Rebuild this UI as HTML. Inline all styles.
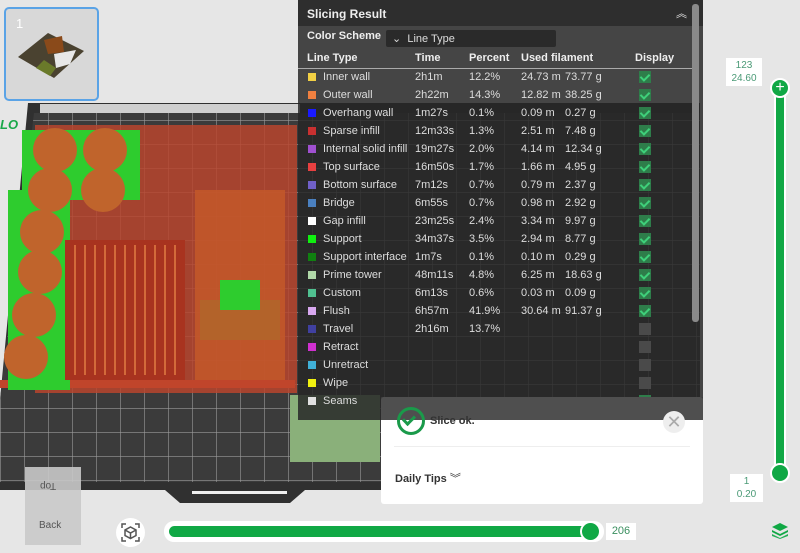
<!DOCTYPE html>
<html><head><meta charset="utf-8"><style>
*{margin:0;padding:0;box-sizing:border-box}
body{width:800px;height:553px;overflow:hidden;background:#e6e6e6;font-family:"Liberation Sans",sans-serif;position:relative}
.abs{position:absolute}
#panel{left:298px;top:0;width:405px;height:420px;background:rgba(38,38,38,0.84);color:#ddd;font-size:11px}
#panel .hd{height:26px;background:#2e2e2e;font-weight:bold;font-size:12px;color:#eee;padding:7px 0 0 9px}
.row{position:absolute;left:0;height:18px;line-height:18px;width:390px}
.row span{position:absolute}
.sw{width:8px;height:8px;top:5px;left:10px}
.cb{width:12px;height:12px;left:341px;top:3px;background:#4a4a4a}
.cb.on{background:#2e7d4a}
.cb.on:after{content:"";position:absolute;left:3px;top:1px;width:4px;height:7px;border:solid #3fd07a;border-width:0 2px 2px 0;transform:rotate(45deg)}
</style></head><body>
<svg class="abs" style="left:0;top:0" width="800" height="553">
<defs><pattern id="g" width="24" height="24" patternUnits="userSpaceOnUse"><rect width="24" height="24" fill="#3b3b3b"/><path d="M0 0H24M0 0V24" stroke="#9a9a9a" stroke-width="1.2"/></pattern></defs>
<polygon points="28,103 700,103 700,490 305,490 290,503 180,503 165,490 0,490 0,400" fill="#303030"/>
<polygon points="34,113 700,113 700,482 0,482 0,400" fill="url(#g)"/>
<rect x="40" y="104" width="260" height="9" fill="#cfcfcf"/>
<rect x="192" y="491" width="95" height="3" fill="#eee"/>
<rect x="35" y="125" width="262" height="268" fill="#b8452e" opacity=".85"/>
<rect x="0" y="380" width="295" height="8" fill="#c0452b"/>
<g fill="#2ecc2e"><rect x="22" y="130" width="118" height="70"/><rect x="8" y="190" width="62" height="200"/><rect x="200" y="300" width="80" height="40"/></g>
<g fill="#c0642c"><circle cx="55" cy="150" r="22"/><circle cx="105" cy="150" r="22"/><circle cx="50" cy="190" r="22"/><circle cx="103" cy="190" r="22"/><circle cx="42" cy="232" r="22"/><circle cx="40" cy="272" r="22"/><circle cx="34" cy="315" r="22"/><circle cx="26" cy="357" r="22"/></g>
<rect x="65" y="240" width="120" height="140" fill="#a8331f"/>
<g stroke="#d36a3a" stroke-width="2"><path d="M75 245V375M85 245V375M95 245V375M105 245V375M115 245V375M125 245V375M135 245V375M145 245V375M155 245V375M165 245V375M175 245V375"/></g>
<rect x="195" y="190" width="90" height="190" fill="#c2582a" opacity=".9"/>
<rect x="220" y="280" width="40" height="30" fill="#2ecc2e"/>
<polygon points="290,395 380,395 380,462 290,462" fill="#8ab07a"/>
<text x="0" y="129" fill="#1aa84a" font-size="13" font-weight="bold" font-style="italic" font-family="Liberation Sans">LO</text>
</svg>
<div class="abs" style="left:4px;top:7px;width:95px;height:94px;border:2px solid #5aa3e6;border-radius:5px;background:#d8d8d8"></div>
<div class="abs" style="left:16px;top:16px;color:#fff;font-size:13px">1</div>
<svg class="abs" style="left:14px;top:30px" width="72" height="50"><polygon points="4,27 34,3 70,21 40,48" fill="#4a4230"/><polygon points="30,10 48,6 50,22 34,24" fill="#8a4a1a"/><polygon points="40,24 62,20 56,34 42,38" fill="#e8e8e8"/><polygon points="30,30 42,38 36,46 22,38" fill="#6a7a2a"/></svg>
<div class="abs" style="left:25px;top:467px;width:56px;height:78px;background:#c9c9c9;opacity:.9"></div>
<div class="abs" style="left:40px;top:480px;font-size:10px;color:#555;transform:rotate(180deg)">Top</div>
<div class="abs" style="left:39px;top:520px;font-size:10px;color:#555">Back</div>
<div class="abs" style="left:116px;top:518px;width:29px;height:29px;border-radius:50%;background:#fff"></div>
<svg class="abs" style="left:121px;top:523px" width="19" height="19" fill="none" stroke="#555" stroke-width="1.5"><path d="M1 5V1H5M14 1H18V5M18 14V18H14M5 18H1V14"/><path d="M9.5 4L15 7V12.5L9.5 15.5L4 12.5V7Z M4 7L9.5 10L15 7M9.5 10V15.5"/></svg>
<div class="abs" style="left:164px;top:521px;width:440px;height:21px;border-radius:10px;background:#fff"></div>
<div class="abs" style="left:169px;top:526px;width:422px;height:11px;border-radius:6px;background:#10a845"></div>
<div class="abs" style="left:580px;top:521px;width:21px;height:21px;border-radius:50%;background:#10a845;border:2px solid #fff"></div>
<div class="abs" style="left:606px;top:523px;width:30px;height:17px;background:#fff;color:#3a8f5f;font-size:11px;text-align:center;line-height:17px">206</div>
<div class="abs" style="left:774px;top:90px;width:12px;height:385px;background:#10a845;border:2px solid #fff;border-radius:6px"></div>
<div class="abs" style="left:770px;top:78px;width:20px;height:20px;border-radius:50%;background:#10a845;border:2px solid #fff;color:#fff;font-size:16px;line-height:15px;text-align:center">+</div>
<div class="abs" style="left:726px;top:58px;width:36px;height:28px;background:#fff;color:#4a9a76;font-size:10px;text-align:center;line-height:13px;padding-top:1px">123<br>24.60</div>
<div class="abs" style="left:770px;top:463px;width:20px;height:20px;border-radius:50%;background:#10a845;border:2px solid #fff"></div>
<div class="abs" style="left:730px;top:474px;width:33px;height:28px;background:#fff;color:#4a9a76;font-size:10px;text-align:center;line-height:13px;padding-top:1px">1<br>0.20</div>
<svg class="abs" style="left:771px;top:522px" width="18" height="17" fill="#10a845"><path d="M9 1L17 5L9 9L1 5Z"/><path d="M1 8L9 12L17 8V10L9 14L1 10Z"/><path d="M1 12L9 16L17 12V14L9 17L1 14Z" opacity=".9"/></svg>
<div class="abs" id="panel">
<div class="hd">Slicing Result<span style="position:absolute;right:16px;top:5px;font-weight:normal;font-size:11px">︽</span></div>
<div class="abs" style="left:9px;top:30px;font-weight:bold;color:#eee">Color Scheme</div>
<div class="abs" style="left:88px;top:30px;width:170px;height:17px;background:#2a2a2a;border-radius:2px;padding:2px 0 0 6px;color:#ddd">⌄&nbsp; Line Type</div>
<div class="row" style="top:49px;font-weight:bold;color:#eee"><span style="left:9px">Line Type</span><span style="left:117px">Time</span><span style="left:171px">Percent</span><span style="left:223px">Used filament</span><span style="left:337px">Display</span></div>
<div class="abs" style="left:0;top:68px;width:395px;height:1px;background:#aaa"></div>
<div class="abs" style="left:394px;top:4px;width:7px;height:318px;background:#8a8a8a;border-radius:3px"></div>
<div id="rows"></div>
</div>
<script>
var d=[["#f2d044","Inner wall","2h1m","12.2%","24.73 m","73.77 g",1],["#f08040","Outer wall","2h22m","14.3%","12.82 m","38.25 g",1],["#1a1aff","Overhang wall","1m27s","0.1%","0.09 m","0.27 g",1],["#c83030","Sparse infill","12m33s","1.3%","2.51 m","7.48 g",1],["#a050d0","Internal solid infill","19m27s","2.0%","4.14 m","12.34 g",1],["#e84040","Top surface","16m50s","1.7%","1.66 m","4.95 g",1],["#7060c8","Bottom surface","7m12s","0.7%","0.79 m","2.37 g",1],["#4a80c0","Bridge","6m55s","0.7%","0.98 m","2.92 g",1],["#ffffff","Gap infill","23m25s","2.4%","3.34 m","9.97 g",1],["#10f010","Support","34m37s","3.5%","2.94 m","8.77 g",1],["#108010","Support interface","1m7s","0.1%","0.10 m","0.29 g",1],["#b0d8a8","Prime tower","48m11s","4.8%","6.25 m","18.63 g",1],["#50c090","Custom","6m13s","0.6%","0.03 m","0.09 g",1],["#d8a8f0","Flush","6h57m","41.9%","30.64 m","91.37 g",1],["#4040a0","Travel","2h16m","13.7%","","",0],["#d030d0","Retract","","","","",0],["#40b0d8","Unretract","","","","",0],["#f0f010","Wipe","","","","",0],["#e0e0e0","Seams","","","","",1]];
var h="";d.forEach(function(r,i){h+='<div class="row" style="top:'+(68+i*18)+'px"><span class="sw" style="background:'+r[0]+'"></span><span style="left:25px">'+r[1]+'</span><span style="left:117px">'+r[2]+'</span><span style="left:171px">'+r[3]+'</span><span style="left:223px">'+r[4]+'</span><span style="left:267px">'+r[5]+'</span><span class="cb'+(r[6]?' on':'')+'"></span></div>'});
document.getElementById("rows").innerHTML=h;
</script>
<div class="abs" style="left:381px;top:397px;width:322px;height:107px;background:#fff;border-radius:3px"></div>
<div class="abs" style="left:381px;top:397px;width:322px;height:23px;background:rgba(60,60,60,0.9)"></div>
<div class="abs" style="left:397px;top:407px;width:28px;height:28px;border-radius:50%;border:3px solid #1a9a4a"></div>
<div class="abs" style="left:405px;top:413px;width:8px;height:12px;border:solid #1a9a4a;border-width:0 3px 3px 0;transform:rotate(45deg)"></div>
<div class="abs" style="left:430px;top:415px;font-size:11px;font-weight:bold;color:#333">Slice ok.</div>
<div class="abs" style="left:663px;top:411px;width:22px;height:22px;border-radius:50%;background:#eee;color:#aaa;font-size:18px;text-align:center;line-height:22px">✕</div>
<div class="abs" style="left:394px;top:446px;width:296px;height:1px;background:#eee"></div>
<div class="abs" style="left:395px;top:470px;font-size:11px;font-weight:bold;color:#333">Daily Tips <span style="font-weight:normal">︾</span></div>
</body></html>
